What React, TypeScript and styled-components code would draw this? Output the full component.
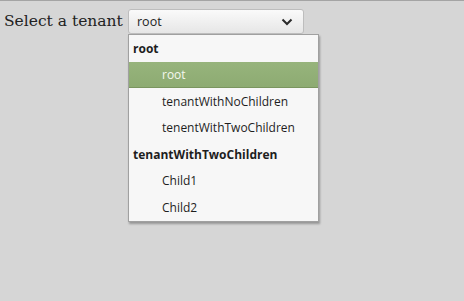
import styled, { createGlobalStyle } from 'styled-components';

const GlobalStyle = createGlobalStyle`
  html, body {
    margin: 0;
    padding: 0;
    background: #d6d6d6;
  }
`;

const Page = styled.div`
  height: 300px;
  border-top: 1px solid #a4a4a4;
  background: #d6d6d6;
`;

const Row = styled.div`
  display: flex;
  align-items: flex-start;
  gap: 5px;
  padding: 8px 0 0 4px;
`;

const Label = styled.label`
  font-family: 'DejaVu Serif', serif;
  font-size: 15.5px;
  color: #222;
  line-height: 24px;
  width: 119px;
  white-space: nowrap;
`;

const SelectWrap = styled.div`
  position: relative;
`;

const SelectButton = styled.div`
  box-sizing: border-box;
  width: 176px;
  height: 25px;
  display: flex;
  align-items: center;
  justify-content: space-between;
  padding: 0 10px 0 8px;
  border: 1px solid #bdbdbd;
  border-radius: 3px;
  background: linear-gradient(#fafafa, #e6e6e6);
  font-family: 'Open Sans', sans-serif;
  font-size: 12.5px;
  color: #1e1e1e;
`;

const Menu = styled.ul`
  position: absolute;
  top: 25px;
  left: 0;
  box-sizing: border-box;
  width: 191px;
  margin: 0;
  padding: 0;
  list-style: none;
  background: #f7f7f7;
  border: 1px solid #a0a0a0;
  box-shadow: 1px 2px 2px rgba(0, 0, 0, 0.3);
  font-family: 'Open Sans', sans-serif;
  font-size: 12px;
  color: #1e1e1e;
`;

const Item = styled.li<{ $header?: boolean; $active?: boolean }>`
  box-sizing: border-box;
  height: 26.5px;
  display: flex;
  align-items: center;
  padding-left: ${(p) => (p.$header ? '4px' : '33px')};
  font-weight: ${(p) => (p.$header ? 700 : 400)};
  ${(p) =>
    p.$active &&
    `
    background: linear-gradient(#97b47c, #8dab72);
    border-bottom: 1px solid #7a955f;
    color: #f4f8ef;
  `}
`;

const Chevron = () => (
  <svg width="12" height="8" viewBox="0 0 12 8">
    <path d="M1.5 1.5 L6 6 L10.5 1.5" fill="none" stroke="#2a2a2a" strokeWidth="2" />
  </svg>
);

const groups = [
  { name: 'root', items: ['root', 'tenantWithNoChildren', 'tenentWithTwoChildren'] },
  { name: 'tenantWithTwoChildren', items: ['Child1', 'Child2'] },
];

export default function App() {
  return (
    <Page>
      <GlobalStyle />
      <Row>
        <Label>Select a tenant</Label>
        <SelectWrap>
          <SelectButton>
            <span>root</span>
            <Chevron />
          </SelectButton>
          <Menu>
            {groups.map((g) => [
              <Item key={g.name} $header>
                {g.name}
              </Item>,
              ...g.items.map((it, i) => (
                <Item key={g.name + it} $active={g.name === 'root' && i === 0}>
                  {it}
                </Item>
              )),
            ])}
          </Menu>
        </SelectWrap>
      </Row>
    </Page>
  );
}
